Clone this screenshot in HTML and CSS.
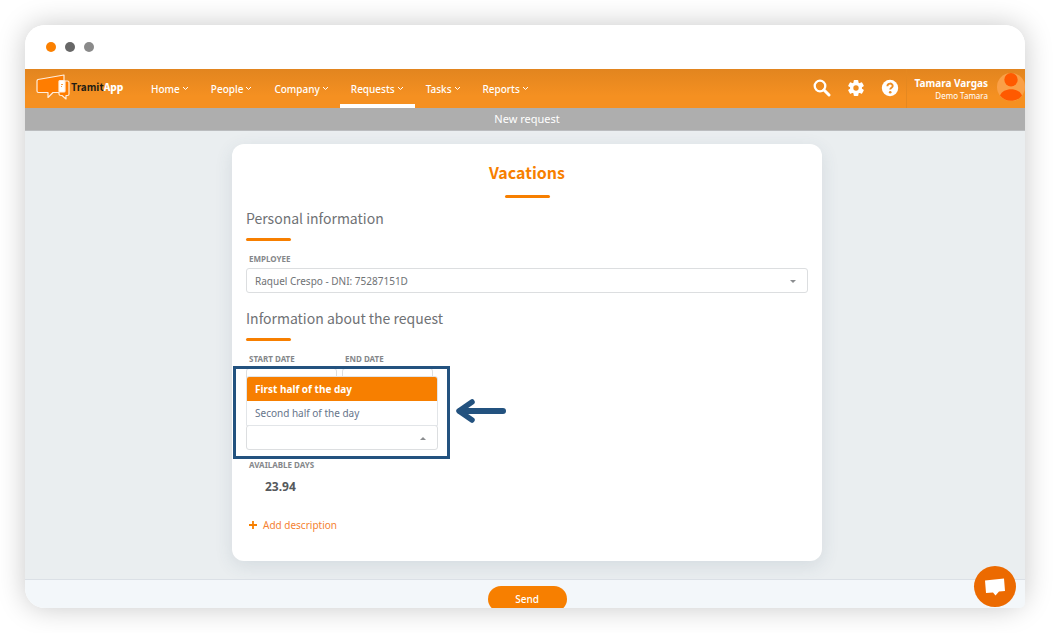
FILE: index.html
```html
<!DOCTYPE html>
<html lang="en">
<head>
  <meta charset="UTF-8">
  <meta name="viewport" content="width=device-width, initial-scale=1.0">
  <title>TramitApp - New request</title>
  <link rel="stylesheet" href="styles.css">
</head>
<body>

<div class="window">
  <div class="window-bar">
    <span class="dot dot-orange"></span>
    <span class="dot dot-dark"></span>
    <span class="dot dot-grey"></span>
  </div>

  <header class="topbar">
    <a href="#" class="logo">
      <svg width="34" height="26" viewBox="0 0 34 26" fill="none" stroke="#ffeedd" stroke-width="1.2" stroke-linejoin="round">
        <path d="M28 6V1L2 5.500Q1 6 1 7V17Q1 18.500 2.500 18.500H12V23.500L17 18.500H23" fill="#ff7d00"/>
        <path d="M28 7H31.500Q33 7 33 8.500V20Q33 21.500 31.500 21.500H30V25L26 21.500H25Q23 21.500 23 20V18" fill="#ff7d00"/>
        <rect x="23" y="6.500" width="6" height="11.500" rx="1" fill="#fff"/>
        <path d="M25 10.500h2M25 12.500h1" stroke="#f5a04a" stroke-width="1"/>
      </svg>
      <span class="logo-text">Tramit<b>App</b></span>
    </a>

    <nav class="menu">
      <a href="#">Home <svg class="caret" viewBox="0 0 7 5"><path d="M1 1l2.500 2.500L6 1"/></svg></a>
      <a href="#">People <svg class="caret" viewBox="0 0 7 5"><path d="M1 1l2.500 2.500L6 1"/></svg></a>
      <a href="#">Company <svg class="caret" viewBox="0 0 7 5"><path d="M1 1l2.500 2.500L6 1"/></svg></a>
      <a href="#" class="active">Requests <svg class="caret" viewBox="0 0 7 5"><path d="M1 1l2.500 2.500L6 1"/></svg></a>
      <a href="#">Tasks <svg class="caret" viewBox="0 0 7 5"><path d="M1 1l2.500 2.500L6 1"/></svg></a>
      <a href="#">Reports <svg class="caret" viewBox="0 0 7 5"><path d="M1 1l2.500 2.500L6 1"/></svg></a>
    </nav>

    <div class="tools">
      <button type="button" aria-label="Search">
        <svg width="18" height="18" viewBox="0 0 18 18" fill="none" stroke="#fff"><circle cx="7" cy="7" r="5.300" stroke-width="2.300"/><path d="M11 11l5 5" stroke-width="3" stroke-linecap="round"/></svg>
      </button>
      <button type="button" aria-label="Settings">
        <svg width="18" height="18" viewBox="0 0 18 18"><g fill="#fff"><rect x="6.600" y="1" width="4.800" height="16" rx="1"/><rect x="6.600" y="1" width="4.800" height="16" rx="1" transform="rotate(60 9 9)"/><rect x="6.600" y="1" width="4.800" height="16" rx="1" transform="rotate(120 9 9)"/><circle cx="9" cy="9" r="6"/></g><circle cx="9" cy="9" r="2.700" fill="#ef8e22"/></svg>
      </button>
      <button type="button" aria-label="Help">
        <svg width="18" height="18" viewBox="0 0 18 18"><circle cx="9" cy="9" r="8.200" fill="#fff"/><path d="M6.400 7.200C6.400 3.700 11.700 3.800 11.700 6.900C11.700 8.800 9.200 8.700 9.200 10.600" fill="none" stroke="#ef8e22" stroke-width="1.900"/><circle cx="9.200" cy="13.200" r="1.300" fill="#ef8e22"/></svg>
      </button>
    </div>

    <div class="user">
      <div class="user-name">
        <strong>Tamara Vargas</strong>
        <span>Demo Tamara</span>
      </div>
      <svg class="avatar" width="28" height="28" viewBox="0 0 28 28">
        <circle cx="14" cy="14" r="14" fill="#faa047"/>
        <circle cx="14" cy="6.700" r="6.700" fill="#ff5a00"/>
        <path d="M3 22.500C6 14 22 14 25 22.500C19.500 29.500 8.500 29.500 3 22.500Z" fill="#ff5a00"/>
      </svg>
    </div>
  </header>

  <div class="subbar">New request</div>

  <main class="content">
    <form class="card" id="requestForm">
      <h1>Vacations</h1>

      <h2>Personal information</h2>
      <div class="field">
        <label for="employee">Employee</label>
        <div class="select">
          <select id="employee">
            <option>Raquel Crespo - DNI: 75287151D</option>
          </select>
        </div>
      </div>

      <h2>Information about the request</h2>
      <div class="dates">
        <div class="field">
          <label for="start">Start date</label>
          <input type="text" id="start">
        </div>
        <div class="field">
          <label for="end">End date</label>
          <input type="text" id="end">
        </div>
      </div>

      <div class="select select-open">
        <div class="highlight"></div>
        <select id="half" aria-label="Half of the day">
          <option></option>
        </select>
        <ul class="options">
          <li class="selected">First half of the day</li>
          <li>Second half of the day</li>
        </ul>
        <svg class="pointer" width="52" height="26" viewBox="0 0 52 26" fill="none" stroke="#23527f" stroke-width="6" stroke-linecap="round">
          <path d="M6 13H49"/>
          <path d="M18 4L5 13L18 22" stroke-width="5.500" stroke-linejoin="round"/>
        </svg>
      </div>

      <div class="available">
        <span class="label">Available days</span>
        <strong>23.94</strong>
      </div>

      <button type="button" class="add">
        <svg width="8" height="8" viewBox="0 0 8 8"><path d="M4 0v8M0 4h8" stroke="#f77f00" stroke-width="1.800"/></svg>
        Add description
      </button>
    </form>
  </main>

  <footer class="actions">
    <button type="submit" form="requestForm" class="send">Send</button>
  </footer>

  <button type="button" class="chat" aria-label="Chat">
    <svg width="22" height="18" viewBox="0 0 22 18" fill="#fff"><path d="M1 2.500L20 0.500L21 13L15 13.500L11.500 17.500L9 14.500L2 15Z"/></svg>
  </button>
</div>

</body>
</html>
```
FILE: styles.css
```css
* { box-sizing: border-box; }
body { margin: 0; padding: 25px 36px 25px 25px; background: #fff; font-family: "Noto Sans", sans-serif; font-size: 10px; color: #6f7275; }
button, input, select { font-family: inherit; font-size: inherit; }
button { border: none; background: none; padding: 0; cursor: pointer; }

/* window frame */
.window { position: relative; display: flex; flex-direction: column; height: calc(100vh - 50px); overflow: hidden; border-radius: 20px 20px 5px 20px; }
body::before { content: ""; position: absolute; z-index: -1; top: 25px; left: 25px; right: 36px; bottom: 25px; border-radius: 20px; box-shadow: 0 0 28px rgba(0,0,0,0.22); }
.window-bar { display: flex; align-items: center; gap: 9px; height: 44px; flex: none; padding: 0 21px; background: #fff; }
.dot { width: 10px; height: 10px; border-radius: 50%; }
.dot-orange { background: #fb8000; }
.dot-dark { background: #676767; }
.dot-grey { background: #8a8a8a; }

/* top bar */
.topbar { display: flex; height: 39px; flex: none; background: linear-gradient(#e2851f, #f59021 70%); color: #fff; }
.logo { display: flex; align-items: center; width: 115px; padding: 0 0 3px 11px; text-decoration: none; gap: 1px; }
.logo-text { font-family: "Noto Sans CJK SC", sans-serif; font-size: 10px; font-weight: bold; line-height: 14px; color: #221c14; }
.logo-text b { color: #fff; }
.menu { display: flex; }
.menu a { display: flex; align-items: center; gap: 2px; padding: 0 11px; color: #fff; text-decoration: none; font-weight: 500; }
.menu a.active { box-shadow: inset 0 -4px #fff; }
.caret { width: 7px; height: 5px; fill: none; stroke: #fff; stroke-width: 1; }
.tools { display: flex; align-items: center; gap: 16px; margin-left: auto; padding: 0 7px 2px 0; }
.tools button { display: flex; color: #fff; }
.user { display: flex; align-items: center; gap: 9px; padding-left: 7px; border-left: 1px solid #e58820; }
.user-name { display: flex; flex-direction: column; padding-bottom: 1px; text-align: right; }
.user-name strong { font-size: 10px; line-height: 14px; }
.user-name span { font-size: 8px; line-height: 11px; }
.avatar { margin-bottom: 4px; }
.subbar { height: 23px; flex: none; padding-left: 4px; background: #aeaeae; border-bottom: 1px solid #bbbdbf; color: #fff; text-align: center; font-size: 11px; line-height: 22px; }

/* request card */
.content { flex: 1 0 auto; padding: 13px 0 18px 4px; background: #eaeef0; }
.card { max-width: 590px; margin: 0 auto; padding: 13px 14px 28px; background: #fff; border-radius: 12px; box-shadow: 0 5px 18px rgba(60,80,110,0.12); }
h1, h2 { margin: 0; font-family: "Noto Sans CJK SC", sans-serif; }
h1 { color: #f77f00; font-size: 16px; font-weight: bold; line-height: 30px; text-align: center; }
h2 { color: #6f7275; font-size: 14px; font-weight: 400; line-height: 24px; }
h1::after, h2::after { content: ""; display: block; width: 45px; height: 3px; border-radius: 2px; background: #f77f00; }
h1::after { margin: 8px auto; }
h2::after { margin: 8px 0 11px; }
label, .label { display: block; padding-left: 3px; color: #85878a; font-size: 8px; font-weight: bold; line-height: 14px; text-transform: uppercase; }
.field label { margin-bottom: 2px; }
.field input, .select select { display: block; width: 100%; height: 25px; padding: 0 8px; border: 1px solid #dcdee0; border-radius: 3px; background: #fff; color: #6f7275; font-size: 10px; appearance: none; }
.card > .field { margin-bottom: 13px; }
.dates { display: grid; grid-template-columns: 91px 91px; gap: 5px; }
.select { position: relative; }
.select::after { content: ""; position: absolute; right: 12px; top: 12px; border: 3px solid transparent; border-top-color: #8b8d90; border-bottom: none; }
.select-open { width: 192px; margin-top: 32px; }
.select-open::after { border: 3px solid transparent; border-bottom-color: #8b8d90; border-top: none; }
.options { position: absolute; bottom: 24px; left: 0; right: 0; margin: 0; padding: 0; list-style: none; background: #fff; border: 1px solid #e2e5e8; border-radius: 3px 3px 0 0; font-size: 10px; line-height: 24px; color: #66748a; overflow: hidden; }
.options li { padding: 0 8px; }
.options .selected { background: #f77f00; color: #fff; font-weight: bold; }
.highlight { position: absolute; top: -59px; left: -13px; right: -12px; bottom: -9px; border: 3px solid #23527f; }
.pointer { position: absolute; left: 208px; top: -27px; }
.available { margin-top: 8px; }
.available strong { display: block; margin-top: 5px; padding-left: 19px; color: #56595c; font-size: 12px; line-height: 20px; }
.add { display: flex; align-items: center; gap: 6px; margin-top: 20px; padding-left: 3px; color: #f58232; font-size: 10px; line-height: 16px; }

/* bottom actions */
.actions { flex: none; padding: 6px 0 7px 4px; background: #f3f7fa; border-top: 1px solid #dbe0e6; text-align: center; }
.send { width: 79px; height: 26px; border-radius: 13px; background: #f77f00; color: #fff; font-size: 10px; font-weight: 500; }
.chat { position: absolute; right: 9px; bottom: 1px; display: flex; align-items: center; justify-content: center; width: 42px; height: 41px; border-radius: 50%; background: #ec6a00; }
```
